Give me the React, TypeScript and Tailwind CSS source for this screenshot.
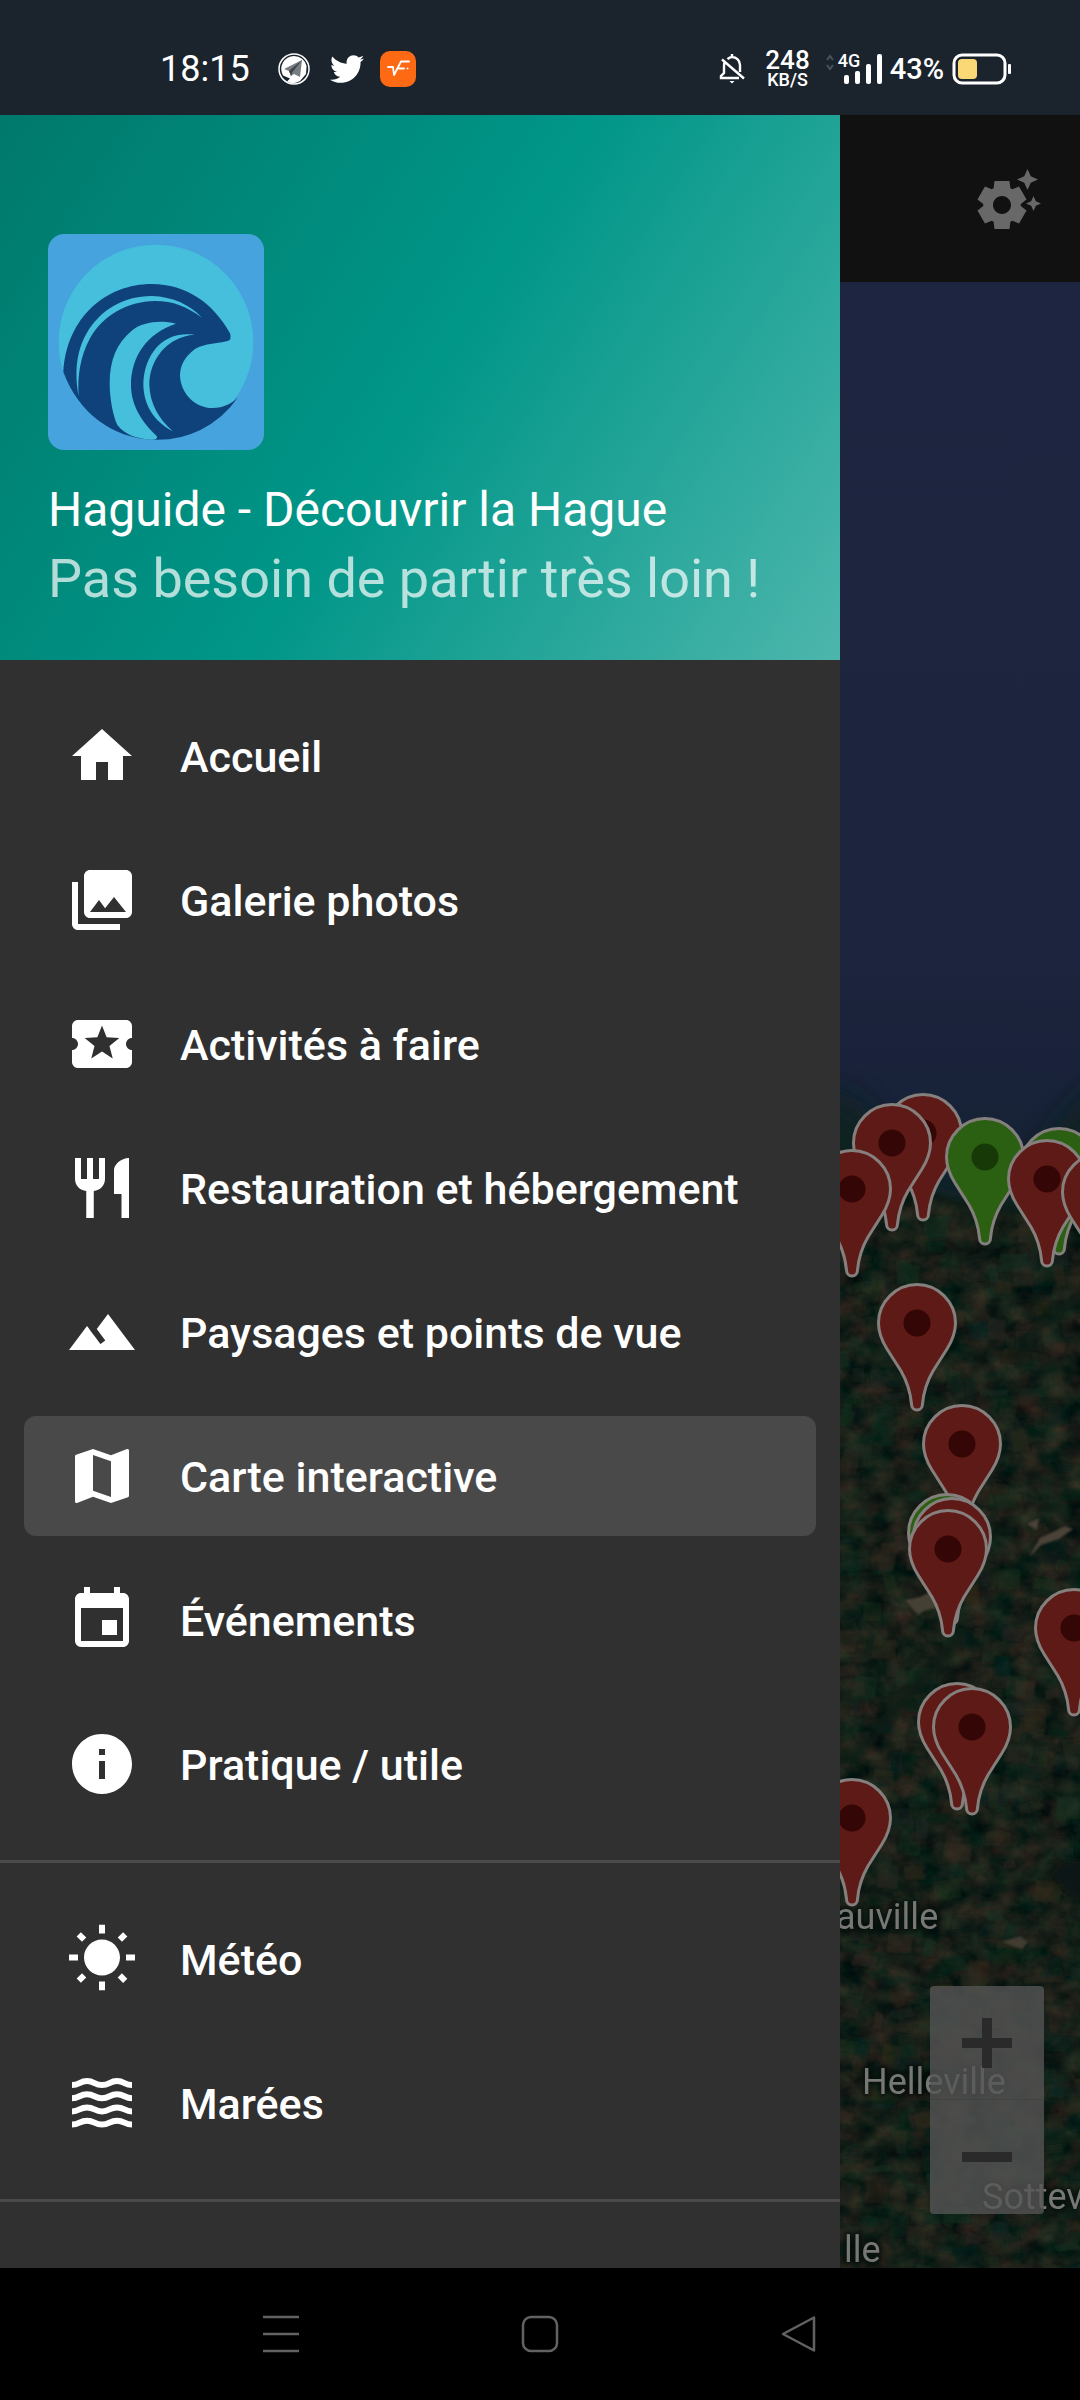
import React from "react";
import {
  MdEvent,
  MdHome,
  MdInfo,
  MdMap,
  MdPhotoLibrary,
  MdRestaurant,
  MdSettingsSuggest,
  MdTerrain,
  MdWbSunny,
} from "react-icons/md";
import { FaTwitter } from "react-icons/fa";

type Item = {
  label: string;
  Icon: React.ComponentType<{ className?: string }>;
  active?: boolean;
};

function TicketIcon({ className }: { className?: string }) {
  return (
    <svg viewBox="0 0 24 24" className={className} fill="currentColor" aria-hidden="true">
      <path d="M20 12c0-1.1.9-2 2-2V6c0-1.1-.9-2-2-2H4c-1.1 0-1.99.9-1.99 2v4c1.1 0 1.99.9 1.99 2s-.89 2-2 2v4c0 1.1.9 2 2 2h16c1.1 0 2-.9 2-2v-4c-1.1 0-2-.9-2-2zm-4.420 4.800L12 14.500l-3.580 2.300 1.080-4.120-3.290-2.690 4.240-.25L12 5.800l1.540 3.950 4.240.25-3.290 2.690 1.090 4.110z" />
    </svg>
  );
}

function WavesIcon({ className }: { className?: string }) {
  return (
    <svg viewBox="0 0 24 24" className={className} fill="none" stroke="currentColor" strokeWidth="2" aria-hidden="true">
      {[6, 10.4, 14.8, 19.2].map((y) => (
        <path key={y} d={`M2 ${y}c2.500 0 2.500-1.300 5-1.300s2.500 1.300 5 1.300 2.500-1.300 5-1.300 2.500 1.300 5 1.300`} />
      ))}
    </svg>
  );
}

const mainItems: Item[] = [
  { label: "Accueil", Icon: MdHome },
  { label: "Galerie photos", Icon: MdPhotoLibrary },
  { label: "Activités à faire", Icon: TicketIcon },
  { label: "Restauration et hébergement", Icon: MdRestaurant },
  { label: "Paysages et points de vue", Icon: MdTerrain },
  { label: "Carte interactive", Icon: MdMap, active: true },
  { label: "Événements", Icon: MdEvent },
  { label: "Pratique / utile", Icon: MdInfo },
];

const seaItems: Item[] = [
  { label: "Météo", Icon: MdWbSunny },
  { label: "Marées", Icon: WavesIcon },
];

type PinData = { x: number; y: number; green?: boolean };

// Map coordinates: centre of the head on x, top of the head on y.
const pins: PinData[] = [
  { x: 83, y: 811 },
  { x: 52, y: 821 },
  { x: 12, y: 867 },
  { x: 145, y: 835, green: true },
  { x: 219, y: 845, green: true },
  { x: 207, y: 857 },
  { x: 261, y: 870 },
  { x: 77, y: 1001 },
  { x: 122, y: 1122 },
  { x: 107, y: 1211, green: true },
  { x: 112, y: 1215 },
  { x: 108, y: 1227 },
  { x: 234, y: 1306 },
  { x: 117, y: 1400 },
  { x: 132, y: 1405 },
  { x: 12, y: 1496 },
];

const places = [
  { name: "auville", x: -4, y: 1613 },
  { name: "Helleville", x: 22, y: 1778 },
  { name: "Sottev", x: 142, y: 1893 },
  { name: "lle", x: 4, y: 1946 },
];

const fieldColors = ["#2c2a1e", "#12301f", "#0b1f1a", "#2b241d", "#183222", "#0e2320", "#33291f"];

// Farm plots scattered over the land with a small deterministic generator.
const plots = (() => {
  let seed = 41;
  const next = () => {
    seed = (seed * 16807) % 2147483647;
    return seed / 2147483647;
  };
  return Array.from({ length: 420 }, () => {
    const x = next() * 260 - 10;
    const y = 930 + next() * 1060;
    const w = 8 + next() * 20;
    const h = 6 + next() * 18;
    const skew = next() * 10 - 5;
    return {
      d: `M${x.toFixed(1)} ${y.toFixed(1)}l${w.toFixed(1)} ${skew.toFixed(1)}l${(-skew).toFixed(1)} ${h.toFixed(1)}l${(-w).toFixed(1)} ${(-skew * 0.6).toFixed(1)}z`,
      fill: fieldColors[Math.floor(next() * fieldColors.length)],
      opacity: Number((0.15 + next() * 0.4).toFixed(2)),
    };
  });
})();

function StatusBar() {
  return (
    <header className="flex h-[115px] shrink-0 items-center justify-between bg-[#1b242d] pt-[23px] pr-[68px] pl-40 text-white">
      <div className="flex items-center">
        <span className="text-[36px] leading-10">18:15</span>
        <svg viewBox="0 0 32 32" className="ml-7 size-8" role="img" aria-label="Telegram">
          <circle cx="16" cy="16" r="15" fill="none" stroke="#fff" strokeWidth="1.500" />
          <path d="M16 3a13 13 0 0 1 12.600 10L28 21l-6 7a13 13 0 0 1-13 .5l3-3-7-3A13 13 0 0 1 16 3z" fill="#fff" />
          <path d="M24 7 6 16l5 2 2 5 3-2 6 3z" fill="#777d81" />
          <path d="M24 7 11 18l2 5 1.500-4z" fill="#3e4449" />
        </svg>
        <FaTwitter className="ml-5 size-[34px]" aria-label="Twitter" />
        <svg viewBox="0 0 36 36" className="ml-4 size-9" aria-hidden="true">
          <rect width="36" height="36" rx="10" fill="#fe6a14" />
          <path d="M8 16h5l1 8 7-13.500h8M19 17.500h5" fill="none" stroke="#fff" strokeWidth="1.800" strokeLinecap="round" strokeLinejoin="round" />
          <circle cx="27.500" cy="17.500" r="1" fill="#fff" />
        </svg>
      </div>
      <div className="flex items-center">
        <svg viewBox="0 0 26 32" className="h-8 w-[26px]" fill="none" stroke="#fff" strokeWidth="2.400" role="img" aria-label="Silencieux">
          <path d="M13 1v3M8.500 6.200C10 4.700 11.500 4 13 4c4.500 0 8 3.500 8 8v7M5.500 9.500C5 11 5 12 5 14v6l-3 3v2h18M3 6.500l22 19" />
          <path d="M10.500 28h5l-2.500 2.500z" fill="#fff" stroke="none" />
        </svg>
        <div className="ml-5 flex flex-col items-center font-medium">
          <span className="text-[26px] leading-[22px]">248</span>
          <span className="text-lg leading-[18px]">KB/S</span>
        </div>
        <div className="relative ml-4 h-8 w-14">
          <svg viewBox="0 0 56 32" className="h-8 w-14" role="img" aria-label="Signal">
            <path d="M1 7l3-4 3 4M1 12l3 4 3-4" fill="none" stroke="#4b525a" strokeWidth="2" />
            <g fill="#fff">
              <rect x="18" y="22" width="5" height="9" rx="2" />
              <rect x="29" y="18" width="5" height="13" rx="2" />
              <rect x="40" y="11" width="5" height="20" rx="2" />
              <rect x="51" y="1" width="5" height="30" rx="2" />
            </g>
          </svg>
          <span className="absolute top-0 left-3 text-lg leading-4 font-medium">4G</span>
        </div>
        <span className="ml-2 text-[29px] leading-8 font-medium">43%</span>
        <svg viewBox="0 0 60 32" className="ml-2 h-8 w-[60px]" role="img" aria-label="Batterie 43 %">
          <rect x="2" y="2" width="51" height="28" rx="8" fill="none" stroke="#fff" strokeWidth="3" />
          <rect x="6" y="6" width="19" height="20" rx="4" fill="#fbd876" />
          <rect x="56" y="11" width="3" height="10" rx="1" fill="#fff" />
        </svg>
      </div>
    </header>
  );
}

function Logo() {
  return (
    <svg viewBox="144 72 648 648" className="size-[216px] rounded-2xl" role="img" aria-label="Haguide">
      <rect x="144" y="72" width="648" height="648" fill="#46a3dd" />
      <circle cx="468" cy="396" r="292" fill="#45bfdc" />
      <path
        d="M190 486C200 320 320 222 455 222C560 222 640 280 690 370Q697 392 680 394C640 402 600 402 575 425C545 450 540 480 540 497C542 550 585 594 638 594C670 594 695 582 714 562A292 292 0 0 1 455 689C340 684 235 610 190 486Z"
        fill="#0f427b"
      />
      <g fill="#45bfdc">
        <path d="M236 558C225 500 225 430 260 370C300 300 370 258 455 258C520 260 570 285 606 323C560 290 520 273 465 273C380 275 310 315 270 385C240 440 232 500 236 558Z" />
        <path d="M528 341C480 330 430 335 395 362C350 400 329 450 329 520C329 570 340 620 352 645C375 675 410 686 455 689C468 690 474 684 470 678C430 640 393 590 393 525C393 440 440 370 528 341Z" />
        <path d="M584 374C530 368 490 385 462 422C440 450 430 490 430 525C432 590 465 635 518 664C475 625 450 580 448 525C448 450 500 380 584 374Z" />
      </g>
    </svg>
  );
}

function MenuGroup({ items }: { items: Item[] }) {
  return (
    <ul className="flex flex-col gap-6 px-6 py-9">
      {items.map(({ label, Icon, active }) => (
        <li key={label}>
          <a
            href="#"
            aria-current={active ? "page" : undefined}
            className={
              active
                ? "flex h-[120px] items-center gap-[42px] rounded-xl bg-[#494949] px-[42px]"
                : "flex h-[120px] items-center gap-[42px] rounded-xl px-[42px]"
            }
          >
            <Icon className="size-[72px] shrink-0" />
            <span className="pt-0.5 text-[43px] leading-[48px] font-medium whitespace-nowrap">{label}</span>
          </a>
        </li>
      ))}
    </ul>
  );
}

function Drawer() {
  return (
    <aside className="w-7/9 shrink-0 bg-[#303030] text-white">
      <div className="bg-[linear-gradient(123deg,#00796b,#009688,#4db6ac)] px-12 pt-[119px] pb-[46px]">
        <Logo />
        <h1 className="mt-[30px] text-[48px] leading-[60px]">Haguide - Découvrir la Hague</h1>
        <p className="mt-1 text-[54px] leading-[70px] text-white/70">Pas besoin de partir très loin !</p>
      </div>
      <nav>
        <MenuGroup items={mainItems} />
        <hr className="border-t-3 border-[#4a4a4a]" />
        <MenuGroup items={seaItems} />
        <hr className="border-t-3 border-[#4a4a4a]" />
      </nav>
    </aside>
  );
}

function Pin({ x, y, green }: PinData) {
  return (
    <svg viewBox="0 0 80 129" className="absolute h-[129px] w-20" style={{ left: x - 40, top: y }} aria-hidden="true">
      <path
        d="M40 1.500C61 1.500 78.500 19 78.500 40C78.500 49 75 58 70 66L56 88C49 100 46.500 110 45.500 121C45.500 129 34.500 129 34.500 121C33.500 110 31 100 24 88L10 66C5 58 1.500 49 1.500 40C1.500 19 19 1.500 40 1.500Z"
        fill={green ? "#2b6013" : "#5e1a16"}
        stroke="#85807e"
        strokeWidth="3"
      />
      <circle cx="40" cy="40" r="13.500" fill={green ? "#173908" : "#340605"} />
    </svg>
  );
}

function Terrain() {
  return (
    <svg viewBox="0 0 240 1986" preserveAspectRatio="xMidYMid slice" className="absolute inset-0 size-full" aria-hidden="true">
      <defs>
        <linearGradient id="sea" x1="0" y1="0" x2="0" y2="980" gradientUnits="userSpaceOnUse">
          <stop offset="0" stopColor="#1e2540" />
          <stop offset="0.700" stopColor="#1d243d" />
          <stop offset="0.830" stopColor="#182239" />
          <stop offset="0.950" stopColor="#12232c" />
          <stop offset="1" stopColor="#12241f" />
        </linearGradient>
        <filter id="soft" x="-30%" y="-30%" width="160%" height="160%">
          <feGaussianBlur stdDeviation="14" />
        </filter>
        <filter id="blurSmall" x="-20%" y="-20%" width="140%" height="140%">
          <feGaussianBlur stdDeviation="2" />
        </filter>
        <filter id="plotBlur">
          <feGaussianBlur stdDeviation="0.800" />
        </filter>
        <filter id="fields" x="0" y="0" width="100%" height="100%" colorInterpolationFilters="sRGB">
          <feTurbulence type="fractalNoise" baseFrequency="0.04 0.05" numOctaves="5" seed="8" />
          <feColorMatrix values="0.3 0 0 0 -0.062  0.14 0.12 0 0 -0.008  0.1 0.06 0 0 0.012  0 0 0 0 1" />
          <feComposite in2="SourceGraphic" operator="in" />
        </filter>
      </defs>
      <rect width="240" height="1986" fill="url(#sea)" />
      <path d="M-30 800L20 820L60 880L110 910L180 900L230 830L270 790V1010H-30Z" fill="#11231f" filter="url(#soft)" opacity="0.800" />
      <path d="M0 905C20 895 40 900 60 892C75 885 80 900 95 912C120 925 140 920 170 930C195 938 220 925 240 920V1986H0Z" fill="#15221a" filter="url(#fields)" />
      <g filter="url(#plotBlur)">
        {plots.map((plot) => (
          <path key={plot.d} d={plot.d} fill={plot.fill} opacity={plot.opacity} />
        ))}
      </g>
      <g filter="url(#blurSmall)" fill="none" stroke="#0c1c19" strokeWidth="7" opacity="0.700">
        <path d="M240 1015C200 1040 190 1050 180 1085" />
        <path d="M60 900C90 920 130 925 175 928C165 960 150 975 120 980" />
        <path d="M125 1350C90 1390 60 1420 10 1480" strokeWidth="12" />
      </g>
      <g filter="url(#plotBlur)" fill="#4b4238">
        <path d="M187 1242l12-6-2 12z M200 1256l25-12 8 3-14 10-18 6-12 12z" />
        <path d="M65 1318l15-3 12-6 14 14-22 6-6 4z" opacity="0.900" />
        <path d="M162 1660l18-6 8 6-6 7z" opacity="0.800" />
      </g>
      <path d="M212 1590c10-14 32-12 32-12v42c-12-2-26-16-32-30z" fill="#091512" filter="url(#blurSmall)" />
    </svg>
  );
}

function MapPane() {
  return (
    <main className="flex min-w-0 flex-1 flex-col">
      <div className="flex h-[167px] shrink-0 items-center justify-end bg-[#111111] pr-9">
        <button type="button" aria-label="Paramètres de la carte">
          <MdSettingsSuggest className="size-[72px] text-[#686868]" />
        </button>
      </div>
      <div className="relative flex-1 overflow-hidden">
        <Terrain />
        {places.map(({ name, x, y }) => (
          <span
            key={name}
            className="absolute text-[36px] leading-11 whitespace-nowrap text-[#777876] [text-shadow:0_0_3px_#08120e,0_0_4px_#08120e,0_0_6px_#08120e,0_0_9px_#08120e]"
            style={{ left: x, top: y }}
          >
            {name}
          </span>
        ))}
        {pins.map((pin) => (
          <Pin key={`${pin.x}-${pin.y}`} {...pin} />
        ))}
        <div className="absolute right-9 bottom-[54px] flex w-[114px] flex-col divide-y divide-[#404342] rounded bg-[#555555]/80">
          <button type="button" aria-label="Zoom avant" className="grid h-[114px] place-items-center">
            <svg viewBox="0 0 50 50" className="size-[50px]" fill="#292a29">
              <path d="M20 0h10v20h20v10H30v20H20V30H0V20h20z" />
            </svg>
          </button>
          <button type="button" aria-label="Zoom arrière" className="grid h-[114px] place-items-center">
            <svg viewBox="0 0 50 50" className="size-[50px]" fill="#292a29">
              <path d="M0 20h50v10H0z" />
            </svg>
          </button>
        </div>
      </div>
    </main>
  );
}

function NavigationBar() {
  return (
    <footer className="grid h-[132px] shrink-0 grid-cols-3 place-items-center bg-black px-[14%]">
      <button type="button" aria-label="Applications récentes">
        <svg viewBox="0 0 38 38" className="size-[38px]" fill="none" stroke="#626262" strokeWidth="2.500">
          <path d="M1 2h36M1 19h36M1 36h36" />
        </svg>
      </button>
      <button type="button" aria-label="Écran d’accueil">
        <svg viewBox="0 0 38 38" className="size-[38px]" fill="none" stroke="#626262" strokeWidth="2.500">
          <rect x="2" y="2" width="34" height="34" rx="8" />
        </svg>
      </button>
      <button type="button" aria-label="Retour">
        <svg viewBox="0 0 38 38" className="size-[38px]" fill="none" stroke="#626262" strokeWidth="2.500" strokeLinejoin="round">
          <path d="M3 19L34 2.500V35.500Z" />
        </svg>
      </button>
    </footer>
  );
}

export default function App() {
  return (
    <div className="flex min-h-screen flex-col bg-black font-[Roboto,sans-serif]">
      <StatusBar />
      <div className="flex flex-1">
        <Drawer />
        <MapPane />
      </div>
      <NavigationBar />
    </div>
  );
}
